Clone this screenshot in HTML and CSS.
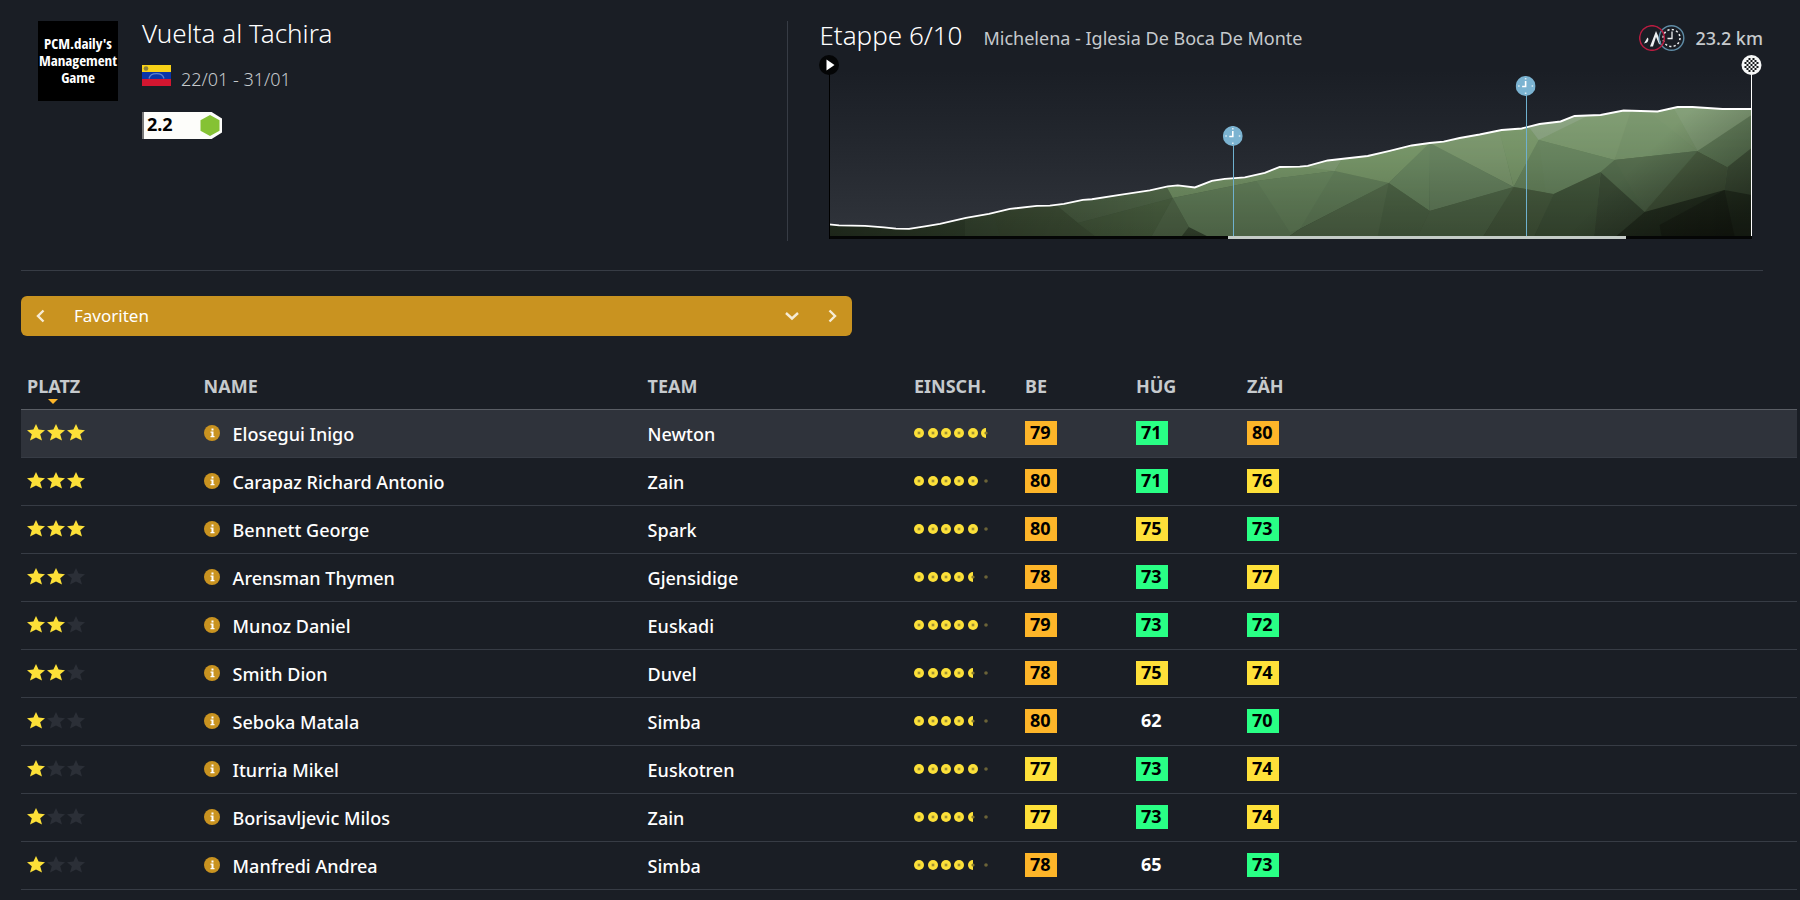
FILE: index.html
```html
<!DOCTYPE html>
<html lang="de">
<head>
<meta charset="utf-8">
<meta name="viewport" content="width=device-width, initial-scale=1">
<title>Vuelta al Tachira</title>
<link rel="stylesheet" href="styles.css">
</head>
<body>
<svg class="sprite" aria-hidden="true">
  <symbol id="star" viewBox="0 0 18 17"><path d="M9 0l2.600 5.600 6.400.6-4.800 4.100 1.800 6.200L9 13.500l-6 3 1.800-6.200L0 6.200l6.400-.6z"/></symbol>
  <symbol id="rank-3" viewBox="0 0 60 18"><use href="#star" x="0" y="0" width="18" height="17" class="star-on"/><use href="#star" x="20" y="0" width="18" height="17" class="star-on"/><use href="#star" x="40" y="0" width="18" height="17" class="star-on"/></symbol>
  <symbol id="rank-2" viewBox="0 0 60 18"><use href="#star" x="0" y="0" width="18" height="17" class="star-on"/><use href="#star" x="20" y="0" width="18" height="17" class="star-on"/><use href="#star" x="40" y="0" width="18" height="17" class="star-off"/></symbol>
  <symbol id="rank-1" viewBox="0 0 60 18"><use href="#star" x="0" y="0" width="18" height="17" class="star-on"/><use href="#star" x="20" y="0" width="18" height="17" class="star-off"/><use href="#star" x="40" y="0" width="18" height="17" class="star-off"/></symbol>
  <symbol id="coin" viewBox="0 0 10 10"><circle cx="5" cy="5" r="5" fill="#fce038"/><circle cx="5" cy="5" r="2" fill="#d9c23a"/><circle cx="5" cy="5" r="1" fill="#8a7c30"/></symbol>
  <symbol id="half" viewBox="0 0 10 10"><path d="M5 0a5 5 0 0 0 0 10z" fill="#fce038"/><circle cx="5" cy="5" r="1.600" fill="#8a7c30"/></symbol>
  <symbol id="none" viewBox="0 0 10 10"><circle cx="5" cy="5" r="1.800" fill="#6b6338"/></symbol>
  <symbol id="form-9" viewBox="0 0 78 10"><use href="#coin" x="0" width="10" height="10"/><use href="#coin" x="14" width="10" height="10"/><use href="#coin" x="27" width="10" height="10"/><use href="#coin" x="40" width="10" height="10"/><use href="#half" x="54" width="10" height="10"/><use href="#none" x="67" width="10" height="10"/></symbol>
  <symbol id="form-10" viewBox="0 0 78 10"><use href="#coin" x="0" width="10" height="10"/><use href="#coin" x="14" width="10" height="10"/><use href="#coin" x="27" width="10" height="10"/><use href="#coin" x="40" width="10" height="10"/><use href="#coin" x="54" width="10" height="10"/><use href="#none" x="67" width="10" height="10"/></symbol>
  <symbol id="form-11" viewBox="0 0 78 10"><use href="#coin" x="0" width="10" height="10"/><use href="#coin" x="14" width="10" height="10"/><use href="#coin" x="27" width="10" height="10"/><use href="#coin" x="40" width="10" height="10"/><use href="#coin" x="54" width="10" height="10"/><use href="#half" x="67" width="10" height="10"/></symbol>
  <symbol id="info" viewBox="0 0 16 16"><circle cx="8" cy="8" r="8" fill="#c99320"/><path d="M7.500 3.500h2v2h-2zM6.500 6.500h3v4.500h1v1.200H6.500V11h1V7.700h-1z" fill="#fff"/></symbol>
  <symbol id="clock" viewBox="0 0 20 20"><circle cx="10" cy="10" r="10" fill="#7bb3d1"/><path d="M10 5v5.500H6.500" fill="none" stroke="#fff" stroke-width="1.600"/><path d="M10 2v1.500M10 16.500V18M2.500 10h1.500M16 10h1.500" stroke="#dcebf3" stroke-width="1.600"/></symbol>
</svg>

<main class="page">
  <header class="top">
    <section class="race">
      <div class="logo">PCM.daily's Management Game</div>
      <div class="race-info">
        <h1 class="title">Vuelta al Tachira</h1>
        <p class="dates">
          <svg class="flag" viewBox="0 0 29 21" role="img" aria-label="Venezuela"><path fill="#f7d117" d="M0 0h29v7H0z"/><path fill="#0a35a8" d="M0 7h29v7H0z"/><path fill="#d31630" d="M0 14h29v7H0z"/><circle cx="4" cy="3.500" r="2.300" fill="#8a7f3c"/><path d="M7 13.500C8.500 7 20.500 7 22 13.500" fill="none" stroke="#5c80cc" stroke-width="1.300"/></svg>
          <span>22/01 - 31/01</span>
        </p>
        <div class="category">
          <span>2.2</span>
          <svg class="hexagon" viewBox="0 0 20 21" aria-hidden="true"><path d="M10 0l9.500 5.200v10.600L10 21 .5 15.800V5.200z" fill="#85c234"/></svg>
        </div>
      </div>
    </section>
    <section class="stage">
      <div class="stage-head">
        <h2 class="title">Etappe 6/10</h2>
        <p class="route">Michelena - Iglesia De Boca De Monte</p>
        <svg class="stage-icons" viewBox="0 0 46 26" aria-hidden="true">
          <path d="M5 18.500l3.500-6c1.500 1 1 3.500-.5 5zM11 21.500l6-15.500 5 11.500-1.800 2L17 12l-3 9.500z" fill="#eef0f1"/>
          <circle cx="32.500" cy="13" r="12.300" fill="none" stroke="#5f8ca6" stroke-width="1.400"/>
          <circle cx="32.500" cy="13" r="8.500" fill="none" stroke="#eef0f1" stroke-width="1.500" stroke-dasharray="2.200 2.250"/>
          <path d="M33 6.500V13.500h-4.500" fill="none" stroke="#eef0f1" stroke-width="1.300"/>
          <circle cx="13" cy="13" r="12.300" fill="none" stroke="#b81c40" stroke-width="1.500"/>
        </svg>
        <p class="distance">23.2 km</p>
      </div>
      <svg class="profile" viewBox="819 54 944 186" role="img" aria-label="Höhenprofil">
        <defs>
          <linearGradient id="sky" gradientUnits="userSpaceOnUse" x1="0" y1="70" x2="0" y2="236"><stop offset="0" stop-color="#2e3239" stop-opacity="0"/><stop offset="1" stop-color="#30343b"/></linearGradient>
          <linearGradient id="slope" gradientUnits="userSpaceOnUse" x1="0" y1="105" x2="0" y2="236"><stop offset="0" stop-color="#86a27a"/><stop offset=".4" stop-color="#6c8a62"/><stop offset=".75" stop-color="#455a3e"/><stop offset="1" stop-color="#303d2a"/></linearGradient>
          <linearGradient id="shade" gradientUnits="userSpaceOnUse" x1="0" y1="110" x2="0" y2="236"><stop offset="0" stop-color="#000" stop-opacity="0"/><stop offset="1" stop-color="#000" stop-opacity=".12"/></linearGradient>
          <linearGradient id="dusk" gradientUnits="userSpaceOnUse" x1="829" y1="0" x2="1160" y2="0"><stop offset="0" stop-color="#000" stop-opacity=".4"/><stop offset="1" stop-color="#000" stop-opacity="0"/></linearGradient>
          <linearGradient id="night" gradientUnits="userSpaceOnUse" x1="1640" y1="160" x2="1720" y2="240"><stop offset="0" stop-color="#000" stop-opacity="0"/><stop offset="1" stop-color="#000" stop-opacity=".35"/></linearGradient>
          <clipPath id="hill"><path d="M829 236V224.500L839 225.500 865 226 884 227.500 896 228.700 909 229 925 226.500 940 224 966 218 989 214 1010 209 1037 206 1050 205.700 1064 204 1083 200 1092 199.300 1120 195 1150 190.500 1168 186.500 1178 185.500 1195 187.500 1212 181 1225 179 1245 177.500 1265 173 1280 167 1300 166.700 1308 166 1328 160.500 1350 158 1368 156 1390 151 1412 145.500 1430 143 1444 141.700 1460 138 1480 134.500 1502 130 1522 128.500 1540 124 1561 121.500 1575 116 1601 115 1624 110.500 1658 111.500 1678 107 1693 107 1723 109 1752 109V236z"/></clipPath>
        </defs>
        <path d="M829 70H1752V236H829z" fill="url(#sky)"/>
        <g clip-path="url(#hill)">
          <path d="M829 100H1752V236H829z" fill="url(#slope)"/>
          <g opacity=".72">
            <path d="M829 180H1173V236H829z" fill="#43573c"/>
            <path d="M829 200H965V236H829z" fill="#3a4c34"/>
            <path d="M1050 200L1078 223 1173 198 1163 180z" fill="#52694a"/>
            <path d="M990 200H1050L1078 223 1095 236H1000z" fill="#435539"/>
            <path d="M1078 223L1173 198 1152 236H1095z" fill="#4a6041"/>
            <path d="M1173 198L1189 227 1182 236H1152z" fill="#52694a"/>
            <path d="M1163 180L1173 198 1257 181 1335 171 1335 100H1163z" fill="#7c9b6c"/>
            <path d="M1173 198L1257 181 1335 171 1389 183 1300 229 1290 236H1207L1189 227z" fill="#66835e"/>
            <path d="M1257 181L1290 232 1300 229 1335 171z" fill="#6b8a62"/>
            <path d="M1335 171L1345 155 1430 130V143L1389 183z" fill="#7f9e6e"/>
            <path d="M1335 171L1300 166 1345 155z" fill="#8aa67c"/>
            <path d="M1389 183L1430 143V211z" fill="#6b8a63"/>
            <path d="M1430 143L1497 120 1514 187z" fill="#839f73"/>
            <path d="M1430 143L1514 187 1430 211z" fill="#688462"/>
            <path d="M1389 183L1430 211 1418 236H1290L1300 229z" fill="#52694a"/>
            <path d="M1389 183L1430 211 1418 236H1378z" fill="#4a6043"/>
            <path d="M1430 211L1514 187 1484 236H1418z" fill="#4c6144"/>
            <path d="M1497 120L1524 120 1539 140 1514 187z" fill="#7e9d6e"/>
            <path d="M1524 120L1600 100 1595 120 1539 140z" fill="#92a98a"/>
            <path d="M1539 140L1600 110 1635 100V111L1615 160z" fill="#829e73"/>
            <path d="M1514 187L1539 140 1615 160 1601 172 1554 194z" fill="#69865f"/>
            <path d="M1539 140L1546 193 1554 194 1601 172 1615 160z" fill="#6a8761"/>
            <path d="M1514 187L1554 194 1535 236H1484z" fill="#42543a"/>
            <path d="M1554 194L1601 172 1595 236H1535z" fill="#3a4b34"/>
            <path d="M1635 100L1615 160 1698 151z" fill="#7b976e"/>
            <path d="M1635 100H1670L1698 151z" fill="#7d9970"/>
            <path d="M1670 100H1752V118L1698 151z" fill="#86a07b"/>
            <path d="M1601 172L1615 160 1698 151 1645 212z" fill="#50674a"/>
            <path d="M1615 160L1698 151 1645 212z" fill="#52694b"/>
            <path d="M1601 172L1645 212 1617 236H1595z" fill="#313f2d"/>
            <path d="M1698 151L1728 167 1725 190 1660 225 1645 212z" fill="#435439"/>
            <path d="M1698 151L1752 115V150L1728 167z" fill="#5f7956"/>
            <path d="M1728 167L1752 148V200L1725 190z" fill="#3b4a34"/>
            <path d="M1645 212L1725 190 1752 195V236H1617z" fill="#1c2418"/>
            <path d="M1660 225L1725 190 1735 236H1662z" fill="#12170f"/>
          </g>
          <path d="M829 100H1752V236H829z" fill="url(#shade)"/>
          <path d="M829 100H1160V236H829z" fill="url(#dusk)"/>
          <path d="M1560 100H1752V236H1560z" fill="url(#night)"/>
        </g>
        <path d="M829 224.500L839 225.500 865 226 884 227.500 896 228.700 909 229 925 226.500 940 224 966 218 989 214 1010 209 1037 206 1050 205.700 1064 204 1083 200 1092 199.300 1120 195 1150 190.500 1168 186.500 1178 185.500 1195 187.500 1212 181 1225 179 1245 177.500 1265 173 1280 167 1300 166.700 1308 166 1328 160.500 1350 158 1368 156 1390 151 1412 145.500 1430 143 1444 141.700 1460 138 1480 134.500 1502 130 1522 128.500 1540 124 1561 121.500 1575 116 1601 115 1624 110.500 1658 111.500 1678 107 1693 107 1723 109 1752 109" fill="none" stroke="#fff" stroke-width="1.900"/>
        <g shape-rendering="crispEdges">
          <path d="M829 236H1753V239H829z" fill="#050606"/>
          <path d="M1228 236H1626V239H1228z" fill="#c5ccc8"/>
          <path d="M829.500 70V239" stroke="#000"/>
          <path d="M1752.500 70V236" stroke="#fff"/>
          <path d="M1233.500 140V236M1526.500 90V236" stroke="#6fb1cf"/>
        </g>
        <circle cx="829" cy="65" r="10" fill="#040506"/><path d="M826.500 59.500v11l8-5.500z" fill="#fff"/>
        <use href="#clock" x="1223" y="126" width="20" height="20"/>
        <use href="#clock" x="1516" y="76" width="20" height="20"/>
        <circle cx="1752" cy="65" r="10" fill="#f6f7f7"/>
        <path d="M1749 58h2v2h-2zM1753 58h2v2h-2zM1747 60h2v2h-2zM1751 60h2v2h-2zM1755 60h2v2h-2zM1745 62h2v2h-2zM1749 62h2v2h-2zM1753 62h2v2h-2zM1757 62h2v2h-2zM1747 64h2v2h-2zM1751 64h2v2h-2zM1755 64h2v2h-2zM1745 66h2v2h-2zM1749 66h2v2h-2zM1753 66h2v2h-2zM1757 66h2v2h-2zM1747 68h2v2h-2zM1751 68h2v2h-2zM1755 68h2v2h-2zM1749 70h2v2h-2zM1753 70h2v2h-2z" fill="#15181a"/>
      </svg>
    </section>
  </header>

  <nav class="picker" aria-label="Ansicht">
    <button class="step" type="button" aria-label="Zurück"><svg viewBox="0 0 16 16"><path d="M10.500 2.500L5 8l5.500 5.500"/></svg></button>
    <div class="view">
      <select class="view-select" aria-label="Ansicht"><option>Favoriten</option></select>
      <svg class="view-arrow" viewBox="0 0 16 16" aria-hidden="true"><path d="M2 5l6 5.500L14 5"/></svg>
    </div>
    <button class="step" type="button" aria-label="Weiter"><svg viewBox="0 0 16 16"><path d="M5.500 2.500L11 8l-5.500 5.500"/></svg></button>
  </nav>

  <table class="riders">
    <colgroup><col class="c-rank"><col class="c-name"><col class="c-team"><col class="c-stat"><col class="c-stat"><col class="c-stat"><col class="c-stat"><col></colgroup>
    <thead>
      <tr><th><span class="sorted">PLATZ</span></th><th>NAME</th><th>TEAM</th><th>EINSCH.</th><th>BE</th><th>HÜG</th><th>ZÄH</th><td></td></tr>
    </thead>
    <tbody>
      <tr class="active"><td><svg class="rank"><use href="#rank-3"/></svg></td><td><div class="name"><button class="info" type="button" aria-label="Info"><svg><use href="#info"/></svg></button>Elosegui Inigo</div></td><td>Newton</td><td><svg class="form"><use href="#form-11"/></svg></td><td><span class="stat high">79</span></td><td><span class="stat good">71</span></td><td><span class="stat high">80</span></td><td></td></tr>
      <tr><td><svg class="rank"><use href="#rank-3"/></svg></td><td><div class="name"><button class="info" type="button" aria-label="Info"><svg><use href="#info"/></svg></button>Carapaz Richard Antonio</div></td><td>Zain</td><td><svg class="form"><use href="#form-10"/></svg></td><td><span class="stat high">80</span></td><td><span class="stat good">71</span></td><td><span class="stat fine">76</span></td><td></td></tr>
      <tr><td><svg class="rank"><use href="#rank-3"/></svg></td><td><div class="name"><button class="info" type="button" aria-label="Info"><svg><use href="#info"/></svg></button>Bennett George</div></td><td>Spark</td><td><svg class="form"><use href="#form-10"/></svg></td><td><span class="stat high">80</span></td><td><span class="stat fine">75</span></td><td><span class="stat good">73</span></td><td></td></tr>
      <tr><td><svg class="rank"><use href="#rank-2"/></svg></td><td><div class="name"><button class="info" type="button" aria-label="Info"><svg><use href="#info"/></svg></button>Arensman Thymen</div></td><td>Gjensidige</td><td><svg class="form"><use href="#form-9"/></svg></td><td><span class="stat high">78</span></td><td><span class="stat good">73</span></td><td><span class="stat fine">77</span></td><td></td></tr>
      <tr><td><svg class="rank"><use href="#rank-2"/></svg></td><td><div class="name"><button class="info" type="button" aria-label="Info"><svg><use href="#info"/></svg></button>Munoz Daniel</div></td><td>Euskadi</td><td><svg class="form"><use href="#form-10"/></svg></td><td><span class="stat high">79</span></td><td><span class="stat good">73</span></td><td><span class="stat good">72</span></td><td></td></tr>
      <tr><td><svg class="rank"><use href="#rank-2"/></svg></td><td><div class="name"><button class="info" type="button" aria-label="Info"><svg><use href="#info"/></svg></button>Smith Dion</div></td><td>Duvel</td><td><svg class="form"><use href="#form-9"/></svg></td><td><span class="stat high">78</span></td><td><span class="stat fine">75</span></td><td><span class="stat fine">74</span></td><td></td></tr>
      <tr><td><svg class="rank"><use href="#rank-1"/></svg></td><td><div class="name"><button class="info" type="button" aria-label="Info"><svg><use href="#info"/></svg></button>Seboka Matala</div></td><td>Simba</td><td><svg class="form"><use href="#form-9"/></svg></td><td><span class="stat high">80</span></td><td><span class="stat">62</span></td><td><span class="stat good">70</span></td><td></td></tr>
      <tr><td><svg class="rank"><use href="#rank-1"/></svg></td><td><div class="name"><button class="info" type="button" aria-label="Info"><svg><use href="#info"/></svg></button>Iturria Mikel</div></td><td>Euskotren</td><td><svg class="form"><use href="#form-10"/></svg></td><td><span class="stat fine">77</span></td><td><span class="stat good">73</span></td><td><span class="stat fine">74</span></td><td></td></tr>
      <tr><td><svg class="rank"><use href="#rank-1"/></svg></td><td><div class="name"><button class="info" type="button" aria-label="Info"><svg><use href="#info"/></svg></button>Borisavljevic Milos</div></td><td>Zain</td><td><svg class="form"><use href="#form-9"/></svg></td><td><span class="stat fine">77</span></td><td><span class="stat good">73</span></td><td><span class="stat fine">74</span></td><td></td></tr>
      <tr><td><svg class="rank"><use href="#rank-1"/></svg></td><td><div class="name"><button class="info" type="button" aria-label="Info"><svg><use href="#info"/></svg></button>Manfredi Andrea</div></td><td>Simba</td><td><svg class="form"><use href="#form-9"/></svg></td><td><span class="stat high">78</span></td><td><span class="stat">65</span></td><td><span class="stat good">73</span></td><td></td></tr>
    </tbody>
  </table>
</main>
</body>
</html>
```
FILE: styles.css
```css
* { box-sizing: border-box; }

body {
  margin: 0;
  background: #1a1e25;
  color: #fff;
  font: 500 18px/24px "Noto Sans", "Open Sans", sans-serif;
}

h1, h2, p { margin: 0; }
button, select { font: inherit; color: inherit; background: none; border: 0; padding: 0; }
.sprite { position: absolute; width: 0; height: 0; }

.page { padding: 21px 3px 0 21px; }

.top {
  display: grid;
  grid-template-columns: 44% 56%;
  margin-right: 34px;
  padding-bottom: 29px;
  border-bottom: 1px solid #373c45;
}

.race { display: flex; gap: 24px; padding-left: 17px; }
.race-info { display: flex; flex-direction: column; }

.logo {
  width: 80px;
  height: 80px;
  padding-top: 14px;
  background: #000;
  text-align: center;
  font: 900 15px/17px "Liberation Sans Narrow", "Open Sans Condensed", "DejaVu Sans Condensed", sans-serif;
}

.title { font-size: 26px; line-height: 24px; font-weight: 300; white-space: nowrap; }

.dates {
  display: flex;
  align-items: center;
  gap: 10px;
  margin-top: 20px;
  color: #c6cacd;
  font-weight: 300;
}
.flag { width: 29px; height: 21px; margin-bottom: 6px; }

.category {
  display: flex;
  justify-content: space-between;
  width: 80px;
  height: 27px;
  margin-top: 20px;
  padding: 0 2px 0 3px;
  border-left: 2px solid #777;
  background: #fdfdfa;
  clip-path: polygon(0 0, 87% 0, 100% 24%, 100% 76%, 87% 100%, 0 100%);
  color: #000;
  font-weight: 700;
}
.hexagon { width: 20px; height: 21px; margin-top: 3px; }

.stage { padding: 0 0 1px 31px; border-left: 1px solid #373c45; }
.stage-head { display: flex; align-items: center; height: 33px; }
.stage-head .title { margin-bottom: 5px; }
.route { margin-left: 21px; color: #c6cacd; font-weight: 400; }
.stage-icons { width: 46px; height: 26px; margin-left: auto; }
.distance { margin-left: 10px; color: #c6cacd; }
.profile { display: block; width: 100%; }

.picker {
  display: flex;
  width: 46.8%;
  height: 40px;
  margin-top: 25px;
  border-radius: 6px;
  background: #c99320;
}
.picker svg { width: 16px; height: 16px; fill: none; stroke: #f6ecd6; stroke-width: 2.4; }
.step { display: grid; place-items: center; width: 40px; }
.view { display: grid; flex: 1; align-items: center; }
.view > * { grid-area: 1 / 1; }
.view-select { width: 100%; height: 40px; padding-left: 13px; font-size: 17px; font-weight: 400; appearance: none; }
.view-arrow { justify-self: end; margin-right: 12px; pointer-events: none; }

.riders { width: 100%; margin-top: 23px; border-collapse: collapse; table-layout: fixed; }
.c-rank { width: 10%; }
.c-name { width: 25%; }
.c-team { width: 15%; }
.c-stat { width: 6.25%; }
.riders th { height: 51px; padding: 3px 0 0 5px; color: #c6cacd; font-weight: 700; text-align: left; white-space: nowrap; }
.riders td { height: 48px; padding: 0 0 0 5px; }
.riders th:first-child, .riders td:first-child { padding-left: 6px; }
.riders tr { border-bottom: 1px solid #373c45; }
.riders thead tr { border-bottom-color: #5a5e65; }
.riders svg { display: block; }
.active { background: #2f333b; }

.sorted { position: relative; }
.sorted::after {
  content: "";
  position: absolute;
  left: 50%;
  top: 100%;
  margin: 1px 0 0 -6px;
  border: 5px solid transparent;
  border-top-color: #fdb529;
  border-bottom: 0;
}

.rank { width: 60px; height: 18px; margin-bottom: 2px; }
.star-on { fill: #fce038; }
.star-off { fill: #2b2f37; }
.name { display: flex; align-items: center; gap: 13px; }
.info { width: 16px; height: 16px; margin-bottom: 2px; }
.info svg { width: 16px; height: 16px; }
.form { width: 78px; height: 10px; margin-bottom: 2px; }

.stat { display: block; width: 32px; height: 24px; margin-bottom: 2px; padding-left: 5px; line-height: 23px; font-weight: 700; }
.high { background: #fdb529; color: #000; }
.good { background: #29ff85; color: #000; }
.fine { background: #fee039; color: #000; }
```
